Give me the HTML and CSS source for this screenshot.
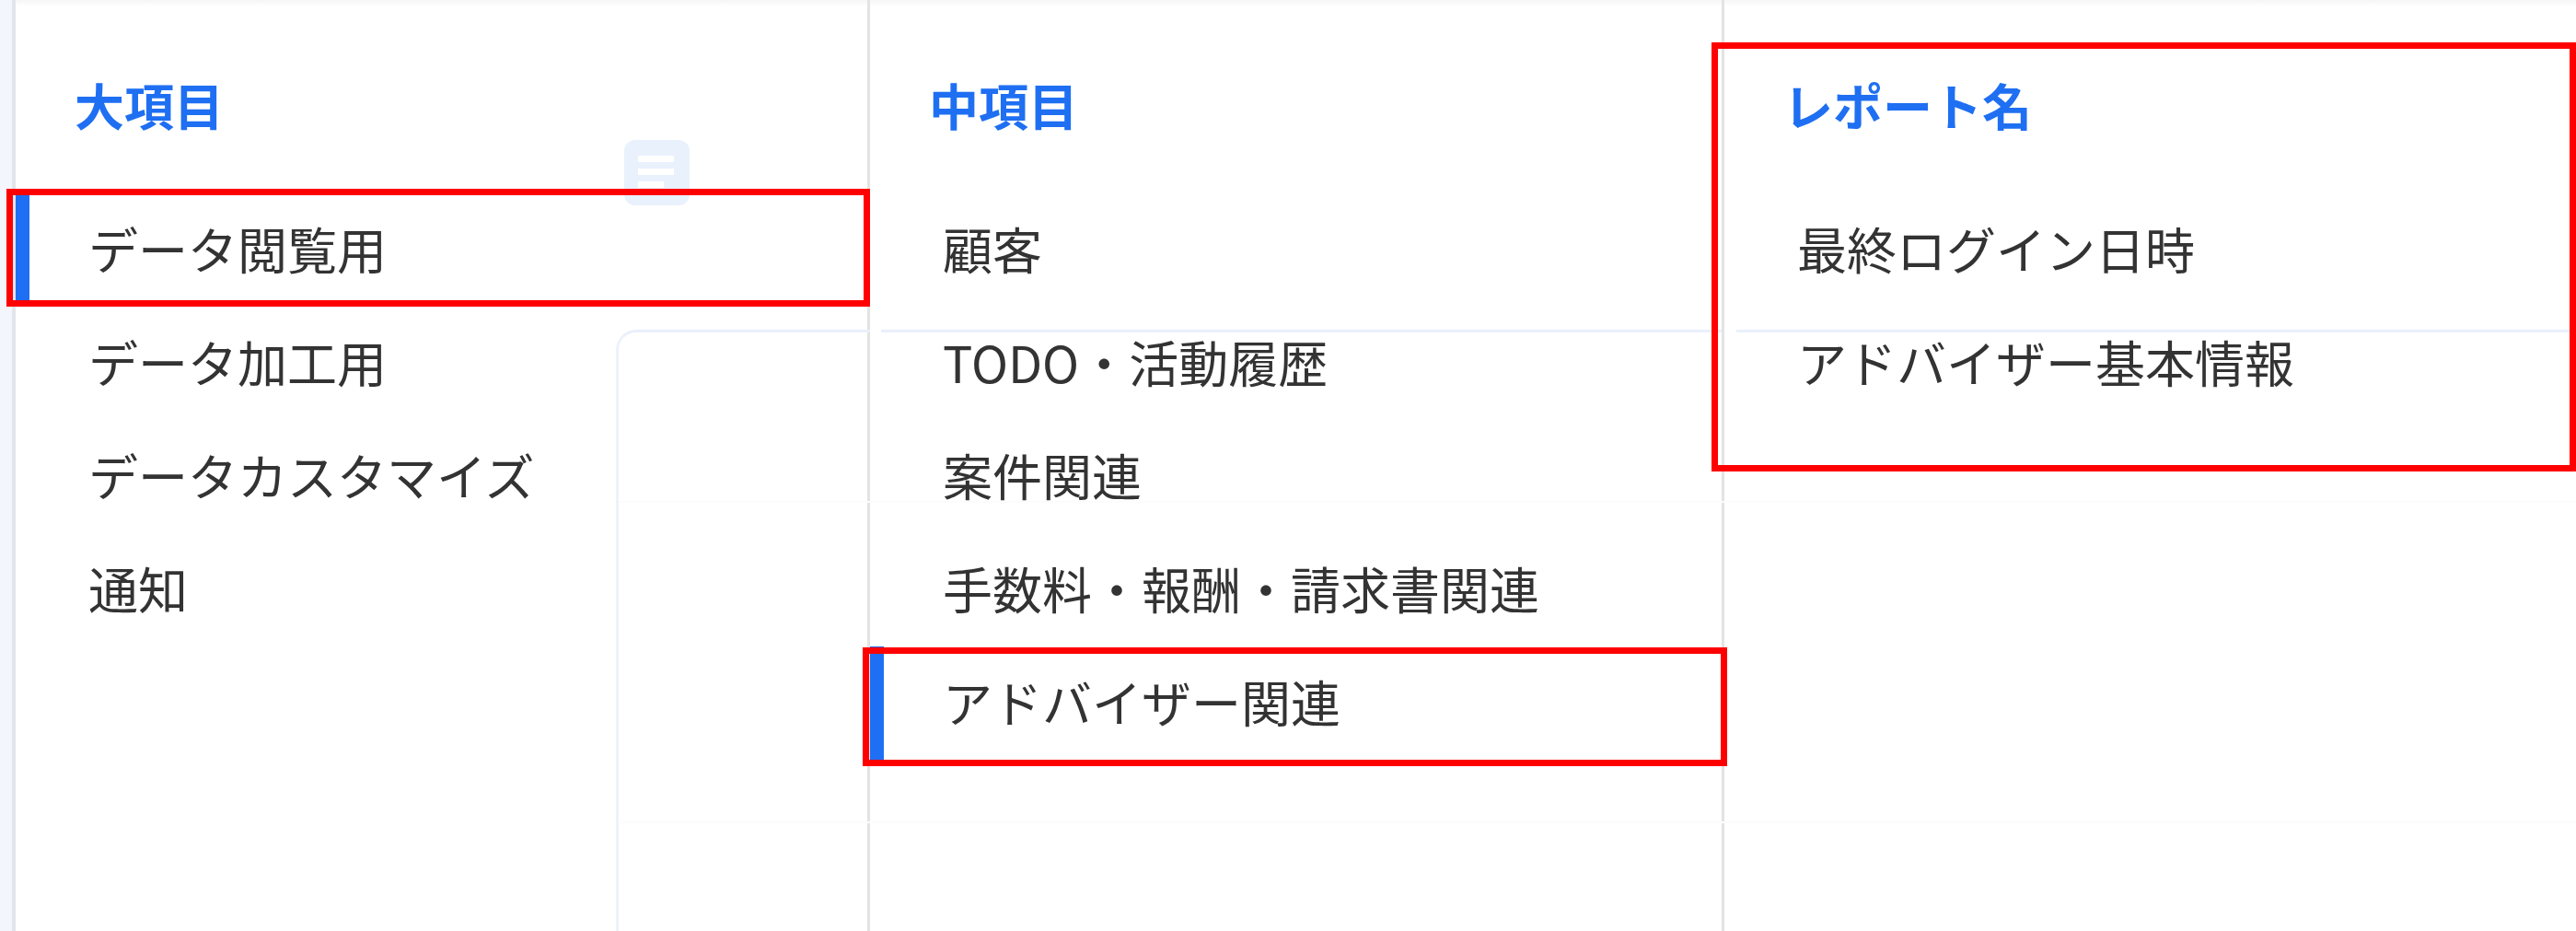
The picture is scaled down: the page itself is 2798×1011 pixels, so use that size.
FILE: index.html
```html
<!DOCTYPE html>
<html lang="ja">
<head>
<meta charset="utf-8">
<title>レポート選択</title>
<link rel="stylesheet" href="styles.css">
</head>
<body>
<div class="page">
  <div class="rail"></div>
  <section class="col">
    <div class="col-head">大項目</div>
    <ul class="list">
      <li class="row is-active">データ閲覧用</li>
      <li class="row">データ加工用</li>
      <li class="row">データカスタマイズ</li>
      <li class="row">通知</li>
    </ul>
  </section>
  <section class="col">
    <div class="col-head">中項目</div>
    <ul class="list">
      <li class="row">顧客</li>
      <li class="row">TODO・活動履歴</li>
      <li class="row">案件関連</li>
      <li class="row">手数料・報酬・請求書関連</li>
      <li class="row is-active">アドバイザー関連</li>
    </ul>
  </section>
  <section class="col col-last">
    <div class="col-head">レポート名</div>
    <ul class="list">
      <li class="row">最終ログイン日時</li>
      <li class="row">アドバイザー基本情報</li>
    </ul>
  </section>

  <div class="ghost">
    <div class="ghost-icon">
      <span class="gl"></span><span class="gl"></span><span class="gl gl-short"></span>
    </div>
    <div class="ghost-card"></div>
    <div class="ghost-line gl-a"></div>
    <div class="ghost-line gl-b"></div>
    <div class="ghost-faint gf-a"></div>
    <div class="ghost-faint gf-b"></div>
  </div>

  <div class="mark mark-1"></div>
  <div class="mark mark-2"></div>
  <div class="mark mark-3"></div>
</div>
</body>
</html>
```

FILE: styles.css
```css
html, body {
  margin: 0;
  padding: 0;
  background: #ffffff;
}
body {
  width: 2798px;
  height: 1011px;
  overflow: hidden;
  font-family: "Noto Sans CJK JP", "Noto Sans", sans-serif;
}
.page {
  position: relative;
  display: flex;
  width: 2798px;
  height: 1011px;
}
.rail {
  width: 13px;
  flex: none;
  background: #f3f6fc;
  border-right: 4px solid #e2e5ea;
}
.col {
  width: 925px;
  flex: none;
  border-right: 3px solid #e3e3e3;
  background: linear-gradient(#f6f6f6 0, #fbfbfb 4px, #ffffff 7px);
}
.col-last {
  border-right: none;
}
.col-head {
  box-sizing: border-box;
  height: 210px;
  padding: 82px 0 0 64px;
  line-height: 64px;
  font-size: 54px;
  font-weight: 700;
  color: #1f6ff2;
}
.list {
  list-style: none;
  margin: 0;
  padding: 0;
}
.row {
  box-sizing: border-box;
  height: 123px;
  display: flex;
  align-items: center;
  border-left: 15px solid transparent;
  padding: 0 0 5px 64px;
  font-size: 54px;
  font-weight: 400;
  color: #333333;
  white-space: nowrap;
}
.row.is-active {
  border-left-color: #1f6ff5;
}

/* faint translucent layer of the page behind */
.ghost {
  position: absolute;
  inset: 0;
  pointer-events: none;
}
.ghost-icon {
  position: absolute;
  left: 678px;
  top: 152px;
  width: 71px;
  height: 71px;
  box-sizing: border-box;
  padding: 17px 0 0 15px;
  border-radius: 12px;
  background: #e9f1fd;
  display: flex;
  flex-direction: column;
  gap: 7px;
}
.gl {
  display: block;
  width: 39px;
  height: 7px;
  background: #ffffff;
}
.gl-short {
  width: 28px;
}
.ghost-card {
  position: absolute;
  left: 669px;
  top: 358px;
  width: 273px;
  bottom: -30px;
  border-top: 3px solid #e9f0fb;
  border-left: 3px solid #edf2fb;
  border-top-left-radius: 22px;
}
.ghost-line {
  position: absolute;
  top: 358px;
  height: 3px;
  background: #e9f0fb;
}
.gl-a { left: 957px; width: 913px; }
.gl-b { left: 1886px; right: 0; }
.ghost-faint {
  position: absolute;
  left: 672px;
  right: 0;
  height: 2px;
  background: #fcfcfc;
}
.gf-a { top: 544px; }
.gf-b { top: 892px; }

/* red annotation frames */
.mark {
  position: absolute;
  box-sizing: border-box;
  border: 7px solid #ff0000;
}
.mark-1 { left: 7px; top: 205px; width: 938px; height: 128px; }
.mark-2 { left: 937px; top: 703px; width: 939px; height: 129px; }
.mark-3 { left: 1859px; top: 46px; width: 939px; height: 466px; }
```
